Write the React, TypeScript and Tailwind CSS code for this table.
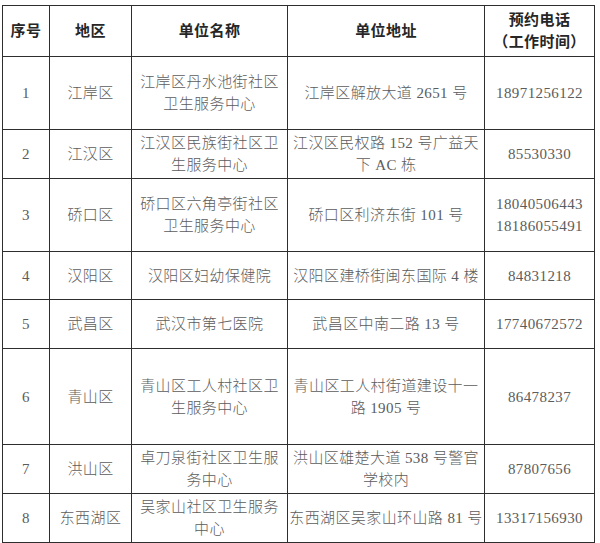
import React from "react";

type Row = { no: string; area: string; name: string[]; addr: string[]; tel: string[] };

const rows: Row[] = [
  { no: "1", area: "江岸区", name: ["江岸区丹水池街社区", "卫生服务中心"], addr: ["江岸区解放大道 2651 号"], tel: ["18971256122"] },
  { no: "2", area: "江汉区", name: ["江汉区民族街社区卫", "生服务中心"], addr: ["江汉区民权路 152 号广益天", "下 AC 栋"], tel: ["85530330"] },
  { no: "3", area: "硚口区", name: ["硚口区六角亭街社区", "卫生服务中心"], addr: ["硚口区利济东街 101 号"], tel: ["18040506443", "18186055491"] },
  { no: "4", area: "汉阳区", name: ["汉阳区妇幼保健院"], addr: ["汉阳区建桥街闽东国际 4 楼"], tel: ["84831218"] },
  { no: "5", area: "武昌区", name: ["武汉市第七医院"], addr: ["武昌区中南二路 13 号"], tel: ["17740672572"] },
  { no: "6", area: "青山区", name: ["青山区工人村社区卫", "生服务中心"], addr: ["青山区工人村街道建设十一", "路 1905 号"], tel: ["86478237"] },
  { no: "7", area: "洪山区", name: ["卓刀泉街社区卫生服", "务中心"], addr: ["洪山区雄楚大道 538 号警官", "学校内"], tel: ["87807656"] },
  { no: "8", area: "东西湖区", name: ["吴家山社区卫生服务", "中心"], addr: ["东西湖区吴家山环山路 81 号"], tel: ["13317156930"] },
];

function Cell({ lines, head = false }: { lines: string[]; head?: boolean }) {
  return (
    <div
      className={
        "bg-white flex flex-col items-center justify-center text-center whitespace-nowrap leading-[22px] " +
        (head ? "font-bold text-[#262626]" : "font-light text-[#5c5c5c]")
      }
    >
      {lines.map((l, i) => (
        <div key={i}>{l}</div>
      ))}
    </div>
  );
}

export default function App() {
  return (
    <div className="w-[600px] h-[543px] bg-white overflow-hidden pt-[5px] pl-[2px]">
      <div
        className="inline-grid grid-cols-[46px_81px_155px_196px_109px] grid-rows-[50px_72px_48px_72px_47px_48px_95px_48px_48px] gap-px bg-[#2e2e2e] p-px text-[15px] tracking-[0.4px]"
        style={{ fontFamily: '"Liberation Serif", "Noto Sans CJK SC", serif' }}
      >
        <Cell head lines={["序号"]} />
        <Cell head lines={["地区"]} />
        <Cell head lines={["单位名称"]} />
        <Cell head lines={["单位地址"]} />
        <Cell head lines={["预约电话", "（工作时间）"]} />
        {rows.map((r) => (
          <React.Fragment key={r.no}>
            <Cell lines={[r.no]} />
            <Cell lines={[r.area]} />
            <Cell lines={r.name} />
            <Cell lines={r.addr} />
            <Cell lines={r.tel} />
          </React.Fragment>
        ))}
      </div>
    </div>
  );
}
